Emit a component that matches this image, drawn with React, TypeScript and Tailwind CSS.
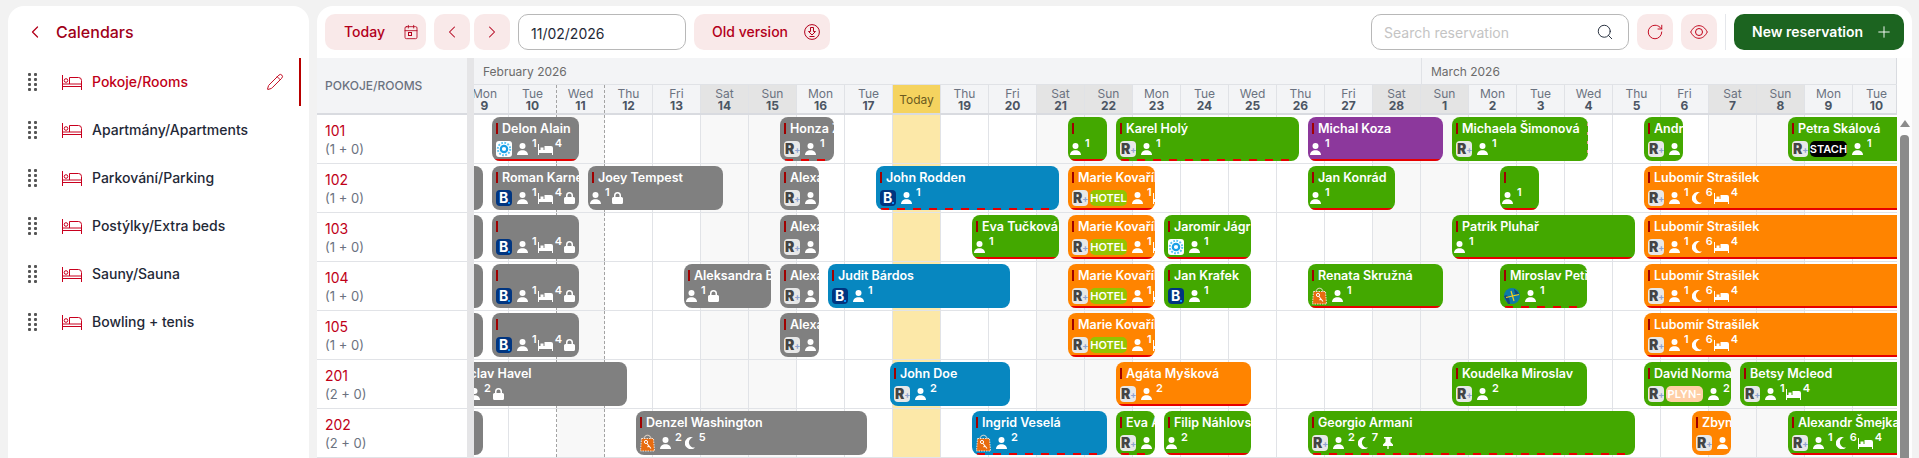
import { Calendar, ChevronLeft, ChevronRight, Pencil, Plus, RotateCw, Search } from 'lucide-react'

type Source = 'R' | 'B' | 'gear' | 'bag' | 'globe'

type Booking = {
  x: number // page px, GRID_X is subtracted when drawn
  w: number
  name?: string
  color: string
  stripe?: 'solid' | 'dashed'
  source?: Source
  tag?: 'HOTEL' | 'STACH' | 'PLYN-'
  guests?: number
  nights?: number
  beds?: number
  lock?: boolean
  pin?: boolean
  edge?: boolean
}

const GRID_X = 461

const GRAY = 'bg-[#808080]'
const GREEN = 'bg-[#43a800]'
const ORANGE = 'bg-[#ff8400]'
const BLUE = 'bg-[#0787c0]'
const PURPLE = 'bg-[#8c389c]'

const calendars = ['Pokoje/Rooms', 'Apartmány/Apartments', 'Parkování/Parking', 'Postýlky/Extra beds', 'Sauny/Sauna', 'Bowling + tenis']

const rooms = [
  { name: '101', cap: '(1 + 0)' },
  { name: '102', cap: '(1 + 0)' },
  { name: '103', cap: '(1 + 0)' },
  { name: '104', cap: '(1 + 0)' },
  { name: '105', cap: '(1 + 0)' },
  { name: '201', cap: '(2 + 0)' },
  { name: '202', cap: '(2 + 0)' },
]

const weekdays = ['Mon', 'Tue', 'Wed', 'Thu', 'Fri', 'Sat', 'Sun']

const days = Array.from({ length: 30 }, (_, i) => ({
  name: weekdays[i % 7],
  date: i < 20 ? i + 9 : i - 19,
  weekend: i % 7 === 5 || i % 7 === 6,
  today: i === 9,
  dashed: i === 1 || i === 2,
  shaded: i === 2,
}))

const lubomir: Booking = { x: 1644, w: 400, name: 'Lubomír Strašílek', color: ORANGE, stripe: 'solid', source: 'R', guests: 1, nights: 6, beds: 4 }
const marie: Booking = { x: 1068, w: 87, name: 'Marie Kovaříková', color: ORANGE, stripe: 'solid', source: 'R', tag: 'HOTEL', guests: 1, beds: 4 }
const leftStub: Booking = { x: 396, w: 87, color: GRAY }
const alexa: Booking = { x: 780, w: 39, name: 'Alexandra', color: GRAY, source: 'R', guests: 1 }

const schedule: Booking[][] = [
  [
    { x: 492, w: 87, name: 'Delon Alain', color: GRAY, stripe: 'solid', source: 'gear', guests: 1, beds: 4 },
    { x: 780, w: 54, name: 'Honza Zelený', color: GRAY, stripe: 'dashed', source: 'R', guests: 1 },
    { x: 1068, w: 39, color: GREEN, stripe: 'solid', guests: 1 },
    { x: 1116, w: 183, name: 'Karel Holý', color: GREEN, stripe: 'dashed', source: 'R', guests: 1 },
    { x: 1308, w: 135, name: 'Michal Koza', color: PURPLE, stripe: 'solid', guests: 1 },
    { x: 1452, w: 136, name: 'Michaela Šimonová', color: GREEN, source: 'R', guests: 1, edge: true },
    { x: 1644, w: 39, name: 'Andrea', color: GREEN, source: 'R', guests: 1 },
    { x: 1788, w: 183, name: 'Petra Skálová', color: GREEN, source: 'R', tag: 'STACH', guests: 1 },
  ],
  [
    leftStub,
    { x: 492, w: 87, name: 'Roman Karnet', color: GRAY, source: 'B', guests: 1, beds: 4, lock: true },
    { x: 588, w: 135, name: 'Joey Tempest', color: GRAY, guests: 1, lock: true },
    alexa,
    { x: 876, w: 183, name: 'John Rodden', color: BLUE, stripe: 'dashed', source: 'B', guests: 1 },
    marie,
    { x: 1308, w: 87, name: 'Jan Konrád', color: GREEN, stripe: 'solid', guests: 1 },
    { x: 1500, w: 39, color: GREEN, stripe: 'solid', guests: 1 },
    lubomir,
  ],
  [
    leftStub,
    { x: 492, w: 87, color: GRAY, source: 'B', guests: 1, beds: 4, lock: true },
    alexa,
    { x: 972, w: 87, name: 'Eva Tučková', color: GREEN, stripe: 'solid', guests: 1 },
    marie,
    { x: 1164, w: 87, name: 'Jaromír Jágr', color: GREEN, stripe: 'solid', source: 'gear', guests: 1 },
    { x: 1452, w: 183, name: 'Patrik Pluhař', color: GREEN, stripe: 'solid', guests: 1 },
    lubomir,
  ],
  [
    leftStub,
    { x: 492, w: 87, color: GRAY, source: 'B', guests: 1, beds: 4, lock: true },
    { x: 684, w: 87, name: 'Aleksandra Bílá', color: GRAY, guests: 1, lock: true },
    alexa,
    { x: 828, w: 182, name: 'Judit Bárdos', color: BLUE, source: 'B', guests: 1 },
    marie,
    { x: 1164, w: 87, name: 'Jan Krafek', color: GREEN, source: 'B', guests: 1 },
    { x: 1308, w: 135, name: 'Renata Skružná', color: GREEN, stripe: 'solid', source: 'bag', guests: 1 },
    { x: 1500, w: 87, name: 'Miroslav Petřík', color: GREEN, stripe: 'dashed', source: 'globe', guests: 1 },
    lubomir,
  ],
  [
    leftStub,
    { x: 492, w: 87, color: GRAY, source: 'B', guests: 1, beds: 4, lock: true },
    alexa,
    marie,
    lubomir,
  ],
  [
    { x: 444, w: 183, name: 'Václav Havel', color: GRAY, source: 'R', guests: 2, lock: true },
    { x: 890, w: 120, name: 'John Doe', color: BLUE, source: 'R', guests: 2 },
    { x: 1116, w: 135, name: 'Agáta Myšková', color: ORANGE, stripe: 'solid', source: 'R', guests: 2 },
    { x: 1452, w: 135, name: 'Koudelka Miroslav', color: GREEN, source: 'R', guests: 2 },
    { x: 1644, w: 87, name: 'David Norman', color: GREEN, source: 'R', tag: 'PLYN-', guests: 2, beds: 4 },
    { x: 1740, w: 231, name: 'Betsy Mcleod', color: GREEN, source: 'R', guests: 1, beds: 4 },
  ],
  [
    leftStub,
    { x: 636, w: 231, name: 'Denzel Washington', color: GRAY, source: 'bag', guests: 2, nights: 5 },
    { x: 972, w: 135, name: 'Ingrid Veselá', color: BLUE, stripe: 'dashed', source: 'bag', guests: 2 },
    { x: 1116, w: 39, name: 'Eva Adamová', color: GREEN, stripe: 'dashed', source: 'R', guests: 2 },
    { x: 1164, w: 87, name: 'Filip Náhlovský', color: GREEN, stripe: 'solid', guests: 2 },
    { x: 1308, w: 327, name: 'Georgio Armani', color: GREEN, stripe: 'dashed', source: 'R', guests: 2, nights: 7, pin: true },
    { x: 1692, w: 39, name: 'Zbyněk', color: ORANGE, source: 'R', guests: 2 },
    { x: 1788, w: 231, name: 'Alexandr Šmejkal', color: GREEN, stripe: 'solid', source: 'R', guests: 1, nights: 6, beds: 4 },
  ],
]

function BedOutline() {
  return (
    <svg width="20" height="15" viewBox="0 0 20 15" fill="none" stroke="#c8001e" strokeWidth="1">
      <path d="M.5 0v15M19.5 15V5.5a3 3 0 0 0-3-3H7.5V9M.5 9h19M.5 11.5h19" />
      <circle cx="4" cy="5.5" r="1.8" />
    </svg>
  )
}

function DragDots() {
  return (
    <div className="grid grid-cols-2 gap-x-[3px] gap-y-[2px]">
      {Array.from({ length: 8 }, (_, i) => (
        <span key={i} className="h-[3px] w-[3px] rounded-[1px] bg-[#555]" />
      ))}
    </div>
  )
}

function Sidebar() {
  return (
    <aside className="h-[470px] w-[301px] shrink-0 rounded-2xl bg-white pr-2">
      <div className="flex h-[52px] items-center pl-[17px]">
        <ChevronLeft size={20} strokeWidth={1.5} className="text-[#b3001b]" />
        <span className="ml-[11px] text-base font-medium text-[#a00018]">Calendars</span>
      </div>
      {calendars.map((name, i) => (
        <div key={name} className={`flex h-12 items-center pl-5 ${i === 0 ? 'border-r-2 border-[#b80000]' : ''}`}>
          <DragDots />
          <span className="ml-[25px]"><BedOutline /></span>
          <span className={`ml-[10px] text-sm font-medium ${i === 0 ? 'text-[#c00018]' : 'text-[#1f2937]'}`}>{name}</span>
          {i === 0 && <Pencil size={18} strokeWidth={1.25} className="ml-auto mr-[15px] text-[#c00018]" />}
        </div>
      ))}
    </aside>
  )
}

function Toolbar() {
  return (
    <div className="mb-2 flex h-9 items-center px-2">
      <button className="flex h-9 w-[101px] items-center gap-[18px] rounded-[10px] bg-[#f9e9e9] pl-[19px] text-sm font-medium text-[#b3001b]">
        Today
        <span className="relative">
          <Calendar size={16} strokeWidth={1.25} />
          <span className="absolute left-[5px] top-[8px] h-[4px] w-[4px] border border-[#b3001b]" />
        </span>
      </button>
      <button className="ml-2 flex h-9 w-9 items-center justify-center rounded-[10px] bg-[#f9e9e9] text-[#b3001b]">
        <ChevronLeft size={20} strokeWidth={1.25} />
      </button>
      <button className="ml-1 flex h-9 w-9 items-center justify-center rounded-[10px] bg-[#f9e9e9] text-[#b3001b]">
        <ChevronRight size={20} strokeWidth={1.25} />
      </button>
      <input readOnly value="11/02/2026" className="ml-2 h-9 w-[168px] rounded-[10px] border border-[#b8b8b8] pl-3 pt-[2px] text-sm text-[#1f2937] outline-none" />
      <button className="ml-2 flex h-9 w-[136px] items-center gap-4 rounded-[10px] bg-[#f9e9e9] pl-[18px] text-sm font-medium text-[#b3001b]">
        Old version
        <svg width="16" height="16" viewBox="0 0 16 16" fill="none" stroke="currentColor" strokeWidth="1">
          <circle cx="8" cy="8" r="7.4" />
          <path d="M6.5 3.5h3v4h2L8 11 4.500 7.500h2zM5.500 12.500h5" />
        </svg>
      </button>
      <div className="ml-auto flex h-9 w-[258px] items-center rounded-[10px] border border-[#b8b8b8] pr-[14px]">
        <input readOnly placeholder="Search reservation" className="min-w-0 flex-1 pl-3 pt-[2px] text-sm outline-none placeholder:text-[#c4c4c4]" />
        <Search size={18} strokeWidth={1.25} className="text-[#1f2937]" />
      </div>
      <button className="ml-2 flex h-9 w-9 items-center justify-center rounded-[10px] bg-[#f9e9e9] text-[#c00018]">
        <RotateCw size={18} strokeWidth={1.25} />
      </button>
      <button className="ml-2 flex h-9 w-9 items-center justify-center rounded-[10px] bg-[#f9e9e9] text-[#c00018]">
        <svg width="18" height="14" viewBox="0 0 18 14" fill="none" stroke="currentColor" strokeWidth="1">
          <path d="M.7 7C2.800 3 5.500 .7 9 .7S15.200 3 17.300 7C15.200 11 12.500 13.300 9 13.300S2.800 11 .7 7z" />
          <circle cx="9" cy="7" r="3.500" />
        </svg>
      </button>
      <span className="ml-2 h-9 w-px bg-[#e5e7eb]" />
      <button className="ml-2 flex h-9 w-[170px] items-center justify-between rounded-[10px] bg-[#1c6420] pl-[18px] pr-[11px] text-sm font-semibold text-white">
        New reservation
        <Plus size={18} strokeWidth={1.25} />
      </button>
    </div>
  )
}

function SourceIcon({ source }: { source: Source }) {
  if (source === 'R') {
    return (
      <span className="flex h-4 w-4 shrink-0 items-center overflow-hidden rounded-[4px] bg-[#e8e8e8] pl-px text-[14px] font-black leading-none text-[#444]">
        R<span className="text-[9px] font-bold text-[#8ea2cf]">+</span>
      </span>
    )
  }
  if (source === 'B') {
    return (
      <span className="flex h-4 w-4 shrink-0 items-center rounded-[4px] bg-[#003580] pl-[3px] text-[14px] font-bold leading-none text-white">
        B<span className="mt-[9px] h-[2px] w-[2px] bg-[#0896ff]" />
      </span>
    )
  }
  if (source === 'gear') {
    return (
      <svg width="16" height="16" viewBox="0 0 16 16" className="shrink-0">
        <rect width="16" height="16" rx="3" fill="#fff" />
        <circle cx="8" cy="8" r="3.200" fill="none" stroke="#1a9fe6" strokeWidth="2.200" />
        <circle cx="8" cy="8" r="6.200" fill="none" stroke="#5cc4f2" strokeWidth="2" strokeDasharray="1.800 1.400" />
      </svg>
    )
  }
  if (source === 'bag') {
    return (
      <svg width="15" height="18" viewBox="0 0 15 18" className="-my-px shrink-0">
        <path d="M4 5c0-5 7-5 7 0" fill="none" stroke="#f0e0d0" strokeWidth="1" />
        <path d="M1.500 4.500h12L14.500 17H.5z" fill="#e86c10" stroke="#fff" strokeWidth=".8" strokeDasharray="1.500 1" />
        <circle cx="6" cy="8" r="1.600" fill="none" stroke="#fff" strokeWidth="1" />
        <path d="M7 9.500l4 5M9 12l-1.500 1" stroke="#fff" strokeWidth="1.100" fill="none" />
      </svg>
    )
  }
  return (
    <svg width="16" height="16" viewBox="0 0 16 16" className="shrink-0">
      <circle cx="8" cy="8" r="8" fill="#0d7aa8" />
      <path d="M0 8c4-3 6 3 6 8H4zM10 1c3 2 5 4 5 6l-4-1z" fill="#16477a" />
      <path d="M2 9.500l13-3M7 3l3 10" stroke="#f5d020" strokeWidth="1.200" fill="none" />
    </svg>
  )
}

function Stat({ children, value, gap = 'ml-[4px]' }: { children: React.ReactNode; value: number; gap?: string }) {
  return (
    <span className="flex shrink-0 items-center">
      {children}
      <span className={`${gap} -mt-[12px] text-[11px] font-semibold leading-none`}>{value}</span>
    </span>
  )
}

function BookingBar({ booking }: { booking: Booking }) {
  const { name, color, stripe, source, tag, guests, nights, beds, lock, pin, edge } = booking
  return (
    <div
      className={`absolute top-[2px] h-11 overflow-hidden rounded-lg pt-[6px] text-white ${color}`}
      style={{ left: booking.x - GRID_X, width: booking.w }}
    >
      <div className="flex h-[11px] items-center pl-[4px]">
        <span className="h-[11px] w-[2px] shrink-0 bg-[#a00000]" />
        {name && <span className="ml-[4px] mt-[2px] whitespace-nowrap text-[12.5px] font-semibold leading-none">{name}</span>}
      </div>
      <div className={`mt-[7px] flex h-4 items-center gap-[1px] ${source ? 'pl-[4px]' : 'pl-[2px]'}`}>
        {source && <SourceIcon source={source} />}
        {tag && (
          <span
            className={`ml-[1px] flex h-4 w-[37px] shrink-0 items-center justify-center rounded-[5px] text-[11px] font-semibold leading-none ${
              tag === 'HOTEL' ? 'bg-[#94c400]' : tag === 'STACH' ? 'bg-black' : 'bg-[#ffcfa6]'
            }`}
          >
            {tag}
          </span>
        )}
        {guests !== undefined && (
          <span className={source ? 'ml-[4px]' : ''}>
            <Stat value={guests}>
              <svg width="11" height="12" viewBox="0 0 11 12" fill="#fff">
                <circle cx="5.500" cy="3" r="3" />
                <path d="M0 12c0-3 2.400-4.800 5.500-4.800S11 9 11 12z" />
              </svg>
            </Stat>
          </span>
        )}
        {nights !== undefined && (
          <span className="ml-[2px]">
            <Stat value={nights}>
              <svg width="10" height="12" viewBox="0 0 10 12" fill="#fff">
                <path d="M8 .5A6 6 0 1 0 10 10.500 5 5 0 0 1 8 .5z" />
              </svg>
            </Stat>
          </span>
        )}
        {beds !== undefined && (
          <Stat value={beds} gap="ml-[2px]">
            <svg width="15" height="11" viewBox="0 0 15 11" fill="#fff">
              <path d="M0 0h1v6h14v5h-1V9H1v2H0zM2.500 3.500h3V6h-3zM6.500 2H13a2 2 0 0 1 2 2v2H6.500z" />
            </svg>
          </Stat>
        )}
        {lock && (
          <svg width="11" height="12" viewBox="0 0 11 12" fill="#fff" className="ml-[1px] shrink-0">
            <path d="M2 5V3.500a3.500 3.500 0 0 1 7 0V5h.500A1.500 1.500 0 0 1 11 6.500v4A1.500 1.500 0 0 1 9.500 12h-8A1.500 1.500 0 0 1 0 10.500v-4A1.500 1.500 0 0 1 1.500 5zm1.500 0h4V3.500a2 2 0 0 0-4 0z" />
          </svg>
        )}
        {pin && (
          <svg width="10" height="12" viewBox="0 0 10 12" fill="#fff" className="ml-[4px] shrink-0">
            <path d="M1 0h8v1.500H7.500V5L10 7.500V9H5.700v3h-1.400V9H0V7.500L2.500 5V1.500H1z" />
          </svg>
        )}
      </div>
      {stripe === 'solid' && <span className="absolute inset-x-0 bottom-0 h-[2px] bg-[#e60000]" />}
      {stripe === 'dashed' && (
        <span className="absolute inset-x-0 bottom-0 h-[2px] bg-[repeating-linear-gradient(90deg,transparent_0_5px,#e60000_5px_13px,transparent_13px_16px)]" />
      )}
      {edge && (
        <span className="absolute bottom-[8px] right-0 top-[6px] w-px bg-[repeating-linear-gradient(0deg,#f2a0a0_0_3px,transparent_3px_9px)]" />
      )}
    </div>
  )
}

function DayHeader() {
  return (
    <div className="h-[57px] border-b-2 border-r border-[#d9dbe0] bg-[#f3f4f6] text-xs text-[#6b7280]">
      <div className="-ml-[13px] flex h-[27px] w-[1440px] border-b border-[#e0e2e6]">
        <div className="w-[960px] pl-[22px] pt-[6px] text-[#6b6b6b]">February 2026</div>
        <div className="w-[480px] border-l border-[#e0e2e6] pl-[9px] pt-[6px] text-[#6b6b6b]">March 2026</div>
      </div>
      <div className="-ml-[13px] flex h-7 w-[1440px]">
        {days.map((d) => (
          <div
            key={`${d.name}${d.date}`}
            className={`flex w-12 shrink-0 flex-col items-center justify-center border-r pt-px leading-3 ${
              d.dashed ? 'border-dashed border-[#a3a3a3]' : 'border-[#e0e2e6]'
            } ${d.today ? 'bg-[#f5d35f] text-[#6b5a20]' : d.weekend ? 'bg-[#e4e4e4]' : ''}`}
          >
            {d.today ? (
              'Today'
            ) : (
              <>
                <span>{d.name}</span>
                <span className="font-bold text-[#4b5563]">{d.date}</span>
              </>
            )}
          </div>
        ))}
      </div>
    </div>
  )
}

function Scrollbar() {
  return (
    <div className="flex w-[15px] shrink-0 flex-col items-center bg-[#fdfdfd] pt-[62px]">
      <span className="h-0 w-0 border-x-[5px] border-b-[7px] border-x-transparent border-b-[#8b8b8b]" />
      <span className="mt-[8px] h-[400px] w-[9px] rounded-t-[4px] bg-[#8b8b8b]" />
    </div>
  )
}

export default function App() {
  return (
    <div className="flex h-[458px] w-[1919px] gap-2 overflow-hidden bg-[#f2f2f2] pl-2 pt-[6px] font-[Inter,sans-serif]">
      <Sidebar />
      <main className="h-[470px] w-[1595px] shrink-0 rounded-2xl bg-white pt-2">
        <Toolbar />
        <div className="flex">
          <div className="w-[150px] shrink-0">
            <div className="flex h-[57px] items-center border-b-2 border-[#d9dbe0] bg-[#f3f4f6] pl-2 text-xs font-medium text-[#6b7280]">
              POKOJE/ROOMS
            </div>
            {rooms.map((room) => (
              <div key={room.name} className="h-[49px] border-b border-[#e1e3e7] pl-2 pt-[6px]">
                <div className="text-sm leading-5 text-[#c00018]">{room.name}</div>
                <div className="text-[13px] leading-[17px] text-[#6b7280]">{room.cap}</div>
              </div>
            ))}
          </div>
          <div className="w-[7px] shrink-0 bg-[#e5e5e7]" />
          <div className="w-[1423px] shrink-0 overflow-hidden">
            <DayHeader />
            {schedule.map((row, r) => (
              <div key={r} className="relative -ml-[13px] flex h-[49px] w-[1440px] border-b border-[#e1e3e7]">
                {days.map((d) => (
                  <div
                    key={`${d.name}${d.date}`}
                    className={`w-12 shrink-0 border-r ${d.dashed ? 'border-dashed border-[#a3a3a3]' : 'border-[#e1e3e7]'} ${
                      d.today ? 'bg-[#fce8a8]' : d.weekend || d.shaded ? 'bg-[#f8f8f8]' : ''
                    }`}
                  />
                ))}
                {row.map((b) => (
                  <BookingBar key={b.x} booking={b} />
                ))}
              </div>
            ))}
          </div>
          <Scrollbar />
        </div>
      </main>
    </div>
  )
}
